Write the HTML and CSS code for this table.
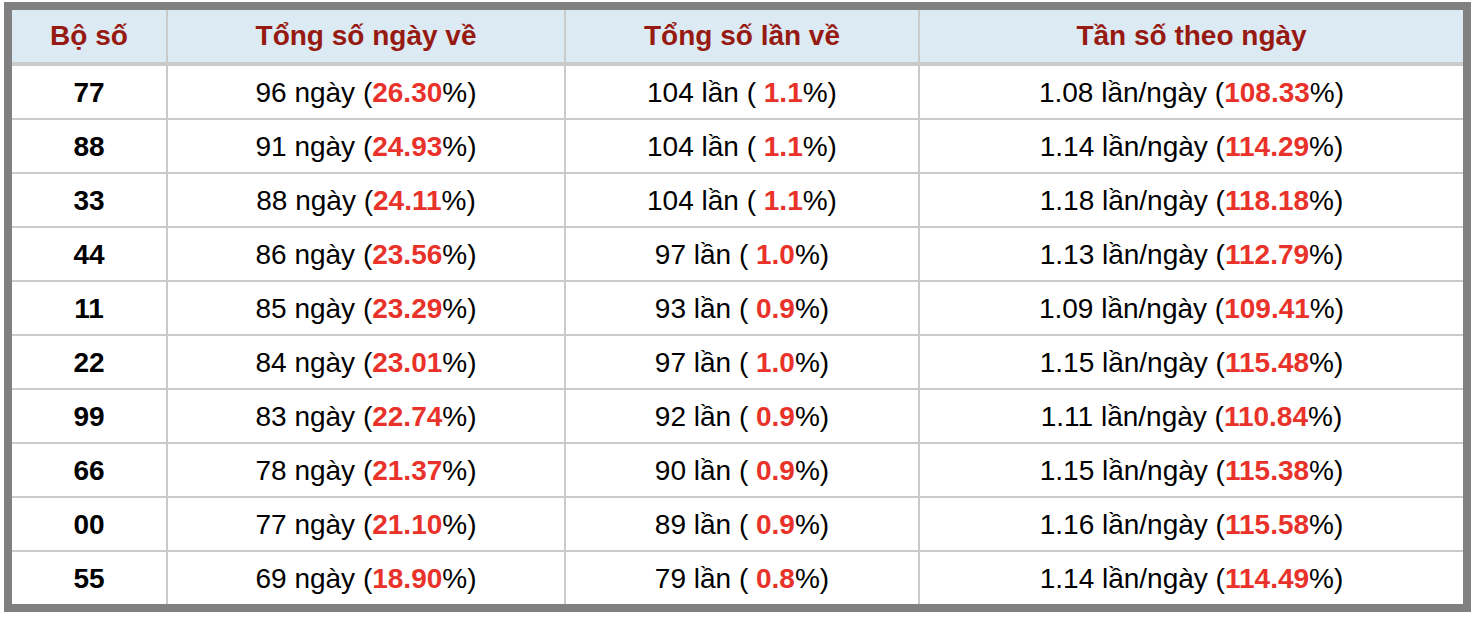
FILE: index.html
```html
<!DOCTYPE html>
<html lang="vi">
<head>
<meta charset="utf-8">
<title>Thống kê bộ số</title>
<link rel="stylesheet" href="styles.css">
</head>
<body>
<div class="frame">
<table class="stats">
<colgroup>
<col class="c1"><col class="c2"><col class="c3"><col class="c4">
</colgroup>
<thead>
<tr><th>Bộ số</th><th>Tổng số ngày về</th><th>Tổng số lần về</th><th>Tần số theo ngày</th></tr>
</thead>
<tbody>
<tr><td class="num">77</td><td>96 ngày (<b class="hl">26.30</b>%)</td><td>104 lần ( <b class="hl">1.1</b>%)</td><td>1.08 lần/ngày (<b class="hl">108.33</b>%)</td></tr>
<tr><td class="num">88</td><td>91 ngày (<b class="hl">24.93</b>%)</td><td>104 lần ( <b class="hl">1.1</b>%)</td><td>1.14 lần/ngày (<b class="hl">114.29</b>%)</td></tr>
<tr><td class="num">33</td><td>88 ngày (<b class="hl">24.11</b>%)</td><td>104 lần ( <b class="hl">1.1</b>%)</td><td>1.18 lần/ngày (<b class="hl">118.18</b>%)</td></tr>
<tr><td class="num">44</td><td>86 ngày (<b class="hl">23.56</b>%)</td><td>97 lần ( <b class="hl">1.0</b>%)</td><td>1.13 lần/ngày (<b class="hl">112.79</b>%)</td></tr>
<tr><td class="num">11</td><td>85 ngày (<b class="hl">23.29</b>%)</td><td>93 lần ( <b class="hl">0.9</b>%)</td><td>1.09 lần/ngày (<b class="hl">109.41</b>%)</td></tr>
<tr><td class="num">22</td><td>84 ngày (<b class="hl">23.01</b>%)</td><td>97 lần ( <b class="hl">1.0</b>%)</td><td>1.15 lần/ngày (<b class="hl">115.48</b>%)</td></tr>
<tr><td class="num">99</td><td>83 ngày (<b class="hl">22.74</b>%)</td><td>92 lần ( <b class="hl">0.9</b>%)</td><td>1.11 lần/ngày (<b class="hl">110.84</b>%)</td></tr>
<tr><td class="num">66</td><td>78 ngày (<b class="hl">21.37</b>%)</td><td>90 lần ( <b class="hl">0.9</b>%)</td><td>1.15 lần/ngày (<b class="hl">115.38</b>%)</td></tr>
<tr><td class="num">00</td><td>77 ngày (<b class="hl">21.10</b>%)</td><td>89 lần ( <b class="hl">0.9</b>%)</td><td>1.16 lần/ngày (<b class="hl">115.58</b>%)</td></tr>
<tr><td class="num">55</td><td>69 ngày (<b class="hl">18.90</b>%)</td><td>79 lần ( <b class="hl">0.8</b>%)</td><td>1.14 lần/ngày (<b class="hl">114.49</b>%)</td></tr>
</tbody>
</table>
</div>
</body>
</html>
```
FILE: styles.css
```css
html, body {
  margin: 0;
  padding: 0;
  background: #ffffff;
}

body {
  padding: 2px 0 0 4px;
  font-family: "Liberation Sans", Arial, sans-serif;
}

.frame {
  width: 1451px;
  border: 8px solid #808080;
}

.stats {
  width: 1451px;
  table-layout: fixed;
  border-collapse: separate;
  border-spacing: 0;
  font-size: 28px;
  color: #000000;
}

.c1 { width: 156px; }
.c2 { width: 398px; }
.c3 { width: 354px; }
.c4 { width: 543px; }

.stats th,
.stats td {
  padding: 0;
  text-align: center;
  vertical-align: middle;
  border-right: 2px solid #cbcbcb;
  border-bottom: 2px solid #cbcbcb;
  white-space: nowrap;
}

.stats th:last-child,
.stats td:last-child {
  border-right: none;
}

.stats th {
  height: 52px;
  background: #dceaf4;
  color: #961a12;
  font-weight: bold;
  border-bottom-width: 4px;
}

.stats td {
  height: 51px;
  padding-top: 1px;
}

.stats tbody tr:last-child td {
  border-bottom: none;
}

.num {
  font-weight: bold;
}

.hl {
  color: #e8322a;
  font-weight: bold;
}
```
